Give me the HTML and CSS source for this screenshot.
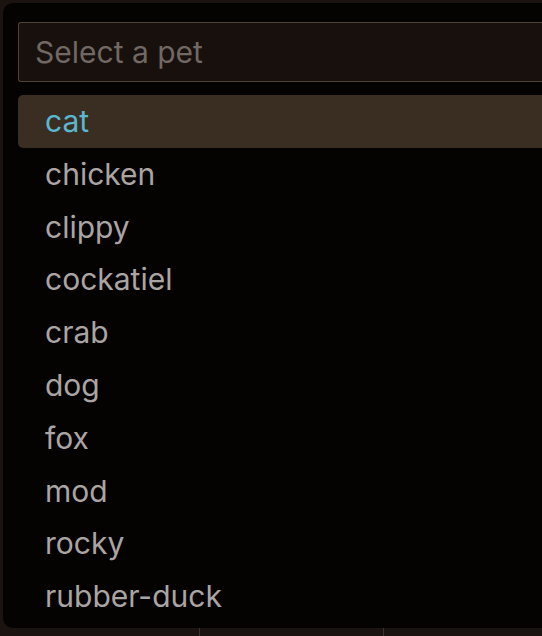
FILE: index.html
```html
<!DOCTYPE html>
<html lang="en">
<head>
    <meta charset="UTF-8">
    <meta name="viewport" content="width=device-width, initial-scale=1.0">
    <title>Select a pet</title>
    <link rel="stylesheet" href="styles.css">
</head>
<body>

    <!-- pet picker -->
    <div class="picker">
        <div class="search">
            <input type="text" placeholder="Select a pet" aria-label="Select a pet">
        </div>
        <ul class="list">
            <li class="item selected">cat</li>
            <li class="item">chicken</li>
            <li class="item">clippy</li>
            <li class="item">cockatiel</li>
            <li class="item">crab</li>
            <li class="item">dog</li>
            <li class="item">fox</li>
            <li class="item">mod</li>
            <li class="item">rocky</li>
            <li class="item">rubber-duck</li>
        </ul>
    </div>

    <div class="status">
        <span class="seg seg-a"></span>
        <span class="seg seg-b"></span>
    </div>

</body>
</html>
```

FILE: styles.css
```css
html, body {
    margin: 0;
    padding: 0;
    height: 100%;
    overflow: hidden;
    background-color: #1a1310;
}
body {
    font-family: Inter, "Liberation Sans", Arial, sans-serif;
    padding: 3px 0 0 3px;
    box-sizing: border-box;
}
.picker {
    width: 100%;
    height: 625px;
    box-sizing: border-box;
    padding: 19px 0 0 15px;
    background-color: #050202;
    border-radius: 10px 0 0 10px;
}
.search input {
    display: block;
    width: 100%;
    height: 60px;
    box-sizing: border-box;
    padding: 0 16px;
    background-color: #17100c;
    border: 1px solid #4d4039;
    border-right: none;
    border-radius: 3px 0 0 3px;
    font-family: inherit;
    font-size: 30px;
    color: #c8c3c0;
    outline: none;
}
.search input::placeholder {
    color: #716864;
}
.list {
    list-style: none;
    margin: 13px 0 0 0;
    padding: 0;
}
.item {
    height: 52.8px;
    line-height: 52.8px;
    padding-left: 27px;
    font-size: 30px;
    color: #aaa5a2;
    border-radius: 5px 0 0 5px;
}
.item.selected {
    background-color: #3a2e23;
    color: #5bb6d1;
}
.status {
    display: flex;
    height: 8px;
}
.seg {
    display: block;
    height: 100%;
}
.seg-a {
    width: 196px;
    border-right: 1px solid #3a3330;
}
.seg-b {
    width: 183px;
    border-right: 1px solid #3a3330;
}
```
